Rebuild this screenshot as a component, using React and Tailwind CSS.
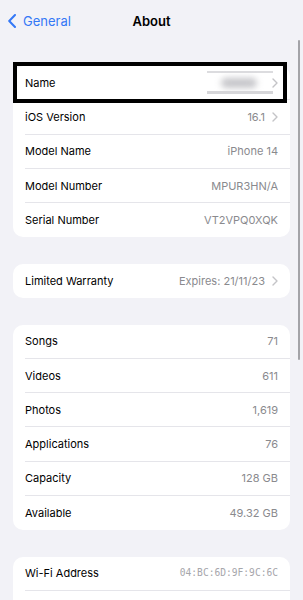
import React from "react";

const Chev = () => (
  <svg width="6" height="10" viewBox="0 0 6 10" className="ml-[7px] shrink-0">
    <path d="M1 1l4 4-4 4" fill="none" stroke="#c4c4c7" strokeWidth="1.4" strokeLinecap="round" strokeLinejoin="round" />
  </svg>
);

function Row({ label, value, chevron, last, mono, children }) {
  return (
    <div className="relative flex h-[34.25px] items-center pl-[12px]">
      <div className="flex h-full flex-1 items-center justify-between pr-[12px]">
        <span className="text-[11px] text-black">{label}</span>
        <span className={"flex items-center " + (mono ? "text-[#a6a6ab] font-['DejaVu_Sans_Mono',monospace] text-[9.6px]" : "text-[11px] text-[#8a8a8e]")}>
          {children ?? value}
          {chevron && <Chev />}
        </span>
      </div>
      {!last && <div className="absolute bottom-0 left-[12px] right-0 h-px bg-[#e5e5ea]" />}
    </div>
  );
}

function Card({ children, className = "" }) {
  return <div className={"rounded-[10px] bg-white " + className}>{children}</div>;
}

export default function App() {
  return (
    <div className="relative h-[600px] w-[303px] overflow-hidden bg-[#f2f2f7] font-['Inter',sans-serif]">
      <div className="relative flex h-[42px] items-center justify-center pt-[1px]">
        <div className="absolute left-[7px] top-[14px] flex items-center">
          <svg width="10" height="14" viewBox="0 0 10 14">
            <path d="M8 1L2.2 7 8 13" fill="none" stroke="#3478f6" strokeWidth="2" strokeLinecap="round" strokeLinejoin="round" />
          </svg>
          <span className="ml-[6px] text-[13px] leading-[14px] text-[#3478f6]">General</span>
        </div>
        <span className="text-[13px] font-semibold text-black">About</span>
      </div>

      <div className="flex flex-col gap-[26.5px] px-[13px] pt-[24px]">
        <Card>
          <div className="relative">
            <Row label="Name" chevron>
              <span className="relative flex h-[34px] w-[52px] items-center justify-center">
                <span className="absolute left-[-6px] right-[-8px] top-[5px] h-[2px] bg-[#dcdcdf] blur-[0.5px]" />
                <span className="block h-[10px] w-[36px] rounded-full bg-[#c6c6ca] blur-[3px]" />
                <span className="absolute left-[-6px] right-[-8px] bottom-[6px] h-[3px] bg-[#d6d6d9] blur-[0.5px]" />
              </span>
            </Row>
            <div className="pointer-events-none absolute -top-[4px] left-0 right-[3px] -bottom-[3px] border-[4px] border-black" />
          </div>
          <Row label="iOS Version" value="16.1" chevron />
          <Row label="Model Name" value="iPhone 14" />
          <Row label="Model Number" value="MPUR3HN/A" />
          <Row label="Serial Number" value="VT2VPQ0XQK" last />
        </Card>

        <Card>
          <Row label="Limited Warranty" value="Expires: 21/11/23" chevron last />
        </Card>

        <Card>
          <Row label="Songs" value="71" />
          <Row label="Videos" value="611" />
          <Row label="Photos" value="1,619" />
          <Row label="Applications" value="76" />
          <Row label="Capacity" value="128 GB" />
          <Row label="Available" value="49.32 GB" last />
        </Card>

        <Card>
          <Row label="Wi-Fi Address" value="04:BC:6D:9F:9C:6C" mono />
          <Row label="" value="" last />
        </Card>
      </div>

      <div className="absolute left-[298px] top-[40px] h-[320px] w-[2px] rounded-full bg-[#a3a3a8]" />
    </div>
  );
}
